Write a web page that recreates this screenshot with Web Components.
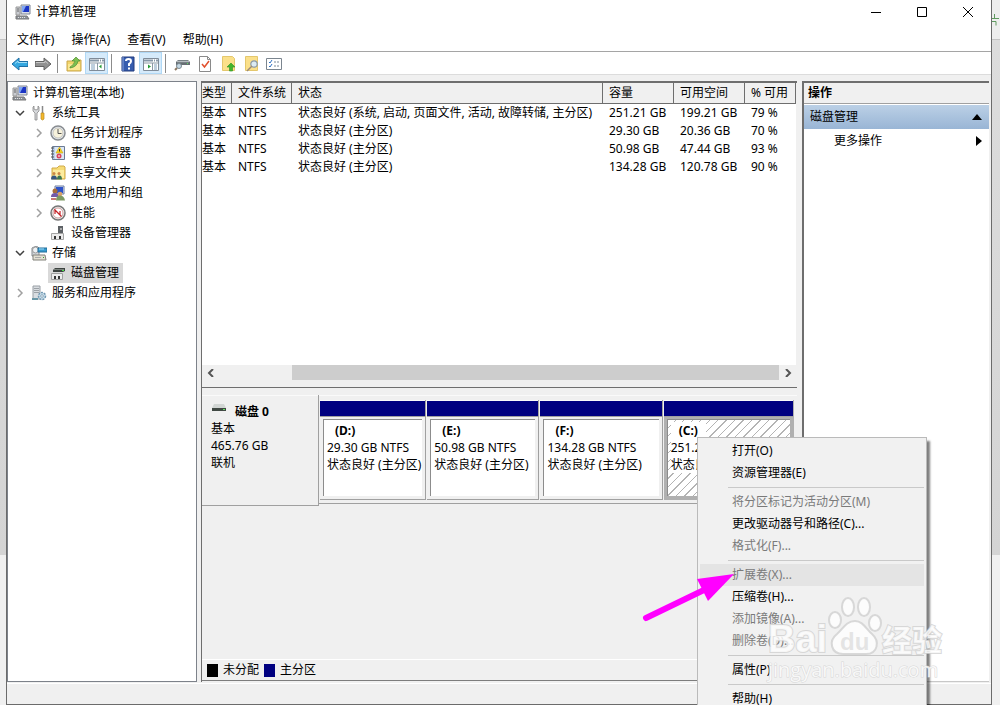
<!DOCTYPE html>
<html lang="zh-CN">
<head>
<meta charset="utf-8">
<meta name="viewport" content="width=device-width, initial-scale=1">
<title>计算机管理</title>
<style>
  html, body {
    height: 100%;
    margin: 0;
  }

  body {
    position: relative;
    box-sizing: border-box;
    overflow: hidden;
    padding: 0 8px 0 6px;
    background: linear-gradient(#eeeeee 39px, #c4c4c4 39px, #c4c4c4 40px, #dcdcdc 40px, #d4d4d4 555px, #f0f0f0 555px);
    color: #000;
    font: 12px/16px "Noto Sans", "Noto Sans CJK SC", sans-serif;
  }
</style>
</head>
<body>
<mmc-window heading="计算机管理">
  <menu-strip slot="menu" items="文件(F),操作(A),查看(V),帮助(H)"></menu-strip>
  <tool-strip slot="tools"></tool-strip>

  <nav-tree slot="tree">
    <tree-item level="0" icon="computer" label="计算机管理(本地)"></tree-item>
    <tree-item level="1" icon="tools" label="系统工具" state="open"></tree-item>
    <tree-item level="2" icon="clock" label="任务计划程序" state="closed"></tree-item>
    <tree-item level="2" icon="events" label="事件查看器" state="closed"></tree-item>
    <tree-item level="2" icon="share" label="共享文件夹" state="closed"></tree-item>
    <tree-item level="2" icon="users" label="本地用户和组" state="closed"></tree-item>
    <tree-item level="2" icon="gauge" label="性能" state="closed"></tree-item>
    <tree-item level="2" icon="device" label="设备管理器"></tree-item>
    <tree-item level="1" icon="storage" label="存储" state="open"></tree-item>
    <tree-item level="2" icon="disk" label="磁盘管理" selected></tree-item>
    <tree-item level="1" icon="services" label="服务和应用程序" state="closed"></tree-item>
  </nav-tree>

  <volume-list slot="volumes"></volume-list>

  <disk-map slot="disks">
    <disk-partition label="(D:)" size="29.30 GB NTFS" status="状态良好 (主分区)"></disk-partition>
    <disk-partition label="(E:)" size="50.98 GB NTFS" status="状态良好 (主分区)"></disk-partition>
    <disk-partition label="(F:)" size="134.28 GB NTFS" status="状态良好 (主分区)"></disk-partition>
    <disk-partition label="(C:)" size="251.21 GB NTFS" status="状态良好" selected></disk-partition>
  </disk-map>

  <action-pane slot="actions"></action-pane>
</mmc-window>

<edge-mark></edge-mark>
<context-menu></context-menu>
<site-watermark></site-watermark>
<pointer-arrow></pointer-arrow>

<script>
const ICONS = {
  computer: `<path d="M6 1h9v9H6z" fill="#d9dde8" stroke="#7d8494"/><path d="M7 2h7v6H7z" fill="#1b35c4"/><path d="M7 2h4L8 8H7z" fill="#7fa5f2"/><path d="M1 3h4v8H1z" fill="#c9ccd2" stroke="#999"/><path d="M2 5h2M2 7h2" stroke="#666"/><path d="M1 12h11l2 3H1z" fill="#8e949c" stroke="#777"/><path d="M3 13.500h8" stroke="#e4e4e4" stroke-dasharray="1 1"/>`,
  tools: `<path d="M3 1v3l2 1 2-1V1l1 1v4L6 8v7H4V8L2 6V2z" fill="#d7d9dc" stroke="#888" stroke-width=".8"/><path d="M11.500 1v7" stroke="#888" stroke-width="1.500"/><path d="M10 8h3v6q-1.500 2-3 0z" fill="#f4b92c" stroke="#b98a20" stroke-width=".7"/>`,
  clock: `<circle cx="8" cy="8" r="7" fill="#e8ebee" stroke="#888c90" stroke-width="1.500"/><circle cx="8" cy="8" r="5" fill="#f7f2dc" stroke="#aaa" stroke-width=".6"/><path d="M8 4v4.500h3.500" fill="none" stroke="#555"/>`,
  events: `<path d="M2.500 1.500h12v13h-12z" fill="#b9d0ec" stroke="#6b7a94"/><path d="M5 2h9v12H5z" fill="#dce7f5"/><path d="M1 3h3M1 6h3M1 9h3M1 12h3" stroke="#555"/><path d="M9.500 2l3.500 6H6z" fill="#f7d21d" stroke="#c9a810" stroke-width=".6"/><path d="M9.500 4v2.500" stroke="#333"/><circle cx="9" cy="11" r="2.500" fill="#d9455a"/><path d="M8 11h2" stroke="#fff"/>`,
  share: `<path d="M2 3h5l2-2h5l1 1v12H2z" fill="#f7dc77" stroke="#d0aa48"/><path d="M3 5h11v8H3z" fill="#fcec9f"/><circle cx="4" cy="8.500" r="1.500" fill="#c98645"/><path d="M1 14.500q0-4 3-4t3 4z" fill="#36567e"/><circle cx="9" cy="8.500" r="1.500" fill="#c98645"/><path d="M7 14.500q0-4 2.500-4t2.500 4z" fill="#3a7652"/>`,
  users: `<path d="M5 1h9v8H5z" fill="#d9e2f3" stroke="#6d7da0"/><path d="M6 2h7v6H6z" fill="#2e53c9"/><circle cx="5" cy="6" r="2.500" fill="#a86c3c"/><path d="M1 12q0-4 4-4t4 4z" fill="#7259a8"/><circle cx="10" cy="9" r="2.300" fill="#d9a066"/><path d="M6 15.500q0-5 4-5t5 5z" fill="#7d9a63"/><path d="M1 13h5v2H1z" fill="#c77a76"/>`,
  gauge: `<circle cx="8" cy="8" r="7" fill="#eee" stroke="#777" stroke-width="1.500"/><circle cx="8" cy="8" r="5" fill="#fff" stroke="#b77" stroke-width=".7"/><path d="M4.500 4.500l7 7M5 9V5l5 5V6" fill="none" stroke="#c41f24" stroke-width="1.200"/>`,
  device: `<path d="M8 1h5v8H8z" fill="#5d6165"/><path d="M10 3h2v2h-2z" fill="#aaa"/><path d="M1.500 8.500h12v6h-12z" fill="#ececec" stroke="#a5a5a5"/><path d="M4 11h2v3H4zM9 11h2v3H9z" fill="#333"/>`,
  storage: `<path d="M1 3q5-3 7 0v8H1z" fill="#d5d9dd" stroke="#858b90"/><circle cx="4.500" cy="5" r="3" fill="#eef1f3" stroke="#999"/><path d="M7 3h9v4H7z" fill="#359bd0" stroke="#236c98"/><path d="M8 4h5" stroke="#a7ddf6"/><path d="M2 10h12l1 5H2z" fill="#e2dfd2" stroke="#82817b"/><path d="M4 12.500h6" stroke="#aaa"/><path d="M12 12h1v1h-1z" fill="#2aa52a"/>`,
  disk: `<path d="M3 5l2-2h10v3l-2 1H3z" fill="#3d4340"/><path d="M4 4.500h10" stroke="#7b837e"/><path d="M12 5h2v1h-2z" fill="#4be04b"/><path d="M1.500 8.500h11v6h-11z" fill="#ececec" stroke="#a0a0a0"/><path d="M4 11h2v3H4zM8 11h2v3H8z" fill="#333"/>`,
  services: `<path d="M2 1h7v13H2z" fill="#d9dde1" stroke="#999fa5"/><path d="M3 3.500h5M3 5.500h5M3 7.500h5" stroke="#9ca1a6"/><path d="M1 14h6" stroke="#6a98a8" stroke-width="2"/><circle cx="11" cy="11" r="3.500" fill="#c9deeb" stroke="#7197b1" stroke-width="1.500" stroke-dasharray="2 1"/><circle cx="11" cy="11" r="1.300" fill="#fff" stroke="#557d9b" stroke-width=".6"/>`,
  back: `<path d="M0 8l7-6v3.500h9v5H7V14z" fill="#35a8e0" stroke="#1f6fa5"/><path d="M3 7.500l3-2.500v1.500h9" fill="none" stroke="#a2def7"/>`,
  forward: `<path d="M16 8L9 2v3.500H0v5h9V14z" fill="#919191" stroke="#626262"/><path d="M1 6.500h9V5l3 2.500" fill="none" stroke="#c6c6c6"/>`,
  up: `<path d="M1 5h5l1-1h8v11H1z" fill="#f3d66c" stroke="#c9a64a"/><path d="M2 8h12v6H2z" fill="#fbe895"/><path d="M4 11q4-2 5-6H6l4-4 4 4h-2q-1 6-8 7z" fill="#7cc050" stroke="#4f8f35" stroke-width=".7"/>`,
  tree: `<path d="M.5 2.500h15v12H.5z" fill="#fff" stroke="#7f8b98"/><path d="M1 4.500h14" stroke="#8697a8" stroke-width="2" stroke-dasharray="9 1 1 1"/><path d="M1 7h14" stroke="#8b98a5"/><path d="M8.500 7v7" stroke="#8b98a5"/><path d="M2 9h4M2 11h4M2 13h4" stroke="#7f9fbc"/><path d="M12.500 8.500v4L10 10.500z" fill="#269b34"/>`,
  help: `<path d="M2 1h12v14H2z" fill="#365cae" stroke="#203a7c"/><path d="M3 1v14" stroke="#8aa5e0"/><path d="M6 5q0-2 2.500-2T11 5.200Q11 7 9 8v2" fill="none" stroke="#fff" stroke-width="2"/><path d="M8 11.500h2v2H8z" fill="#fff"/>`,
  pane: `<path d="M.5 2.500h15v12H.5z" fill="#fff" stroke="#7f8b98"/><path d="M1 4.500h14" stroke="#8697a8" stroke-width="2" stroke-dasharray="9 1 1 1"/><path d="M1 7h14" stroke="#8b98a5"/><path d="M9.500 7v7" stroke="#8b98a5"/><path d="M11 9h3M11 11h3M11 13h3" stroke="#7f9fbc"/><path d="M5 8.500v4l3-2z" fill="#269b34"/>`,
  drive: `<path d="M2 6l2-2h10l2 2v3H2z" fill="#666e73"/><path d="M3 5.500h12" stroke="#b5bcc0" stroke-width="1.500"/><circle cx="5" cy="10" r="2.500" fill="#c5d8e4" stroke="#7b8991"/><path d="M3 12l-2 2" stroke="#8b7761" stroke-width="2"/><path d="M13 7h1v1h-1z" fill="#5be15b"/>`,
  check: `<path d="M2.500.5h8l3 3v12h-11z" fill="#fff" stroke="#8a8a8a"/><path d="M10.500.5v3h3" fill="none" stroke="#8a8a8a"/><path d="M5 8l2.500 3L12 5" fill="none" stroke="#e1502d" stroke-width="1.500"/>`,
  export: `<path d="M2.500.5h10l2 2v12h-12z" fill="#fbe08a" stroke="#e4c76d"/><path d="M11 7l4 4h-2.500v4h-3v-4H7z" fill="#43b52b" stroke="#3b9a2c" stroke-width=".7"/>`,
  find: `<path d="M2.500.5h12v14h-12z" fill="#fbe08a" stroke="#e4c76d"/><circle cx="11" cy="8" r="3.200" fill="#dcebf4" stroke="#8b9aa6" stroke-width="1.200"/><path d="M9 10l-5 5" stroke="#9b8a78" stroke-width="1.500"/>`,
  options: `<path d="M.5 2.500h15v11H.5z" fill="#fff" stroke="#7b858f"/><path d="M3 6l1 1 2-3M3 10l1 1 2-3" fill="none" stroke="#2f6fc1"/><path d="M8 6h5M8 10h5" stroke="#7d8996" stroke-dasharray="2 1"/>`,
  hdd: `<path d="M3 4h10l2 4H1z" fill="#d2d6d4"/><path d="M1 8h14v3H1z" fill="#414944"/><path d="M12 9h2v1h-2z" fill="#61e861"/>`
};

class MmcIcon extends HTMLElement {
  constructor() {
    super();
    this.shadowDOM = this.attachShadow({ mode: 'open' });
  }

  connectedCallback() {
    this.shadowDOM.innerHTML = `
    <style>
    :host {
      display: block;
      flex: none;
      width: 16px;
      height: 16px;
    }
    svg {
      display: block;
    }
    </style>
    <svg width="16" height="16" viewBox="0 0 16 16" fill="none" aria-hidden="true">${ICONS[this.getAttribute('name')]}</svg>`;
  }
}

class MmcWindow extends HTMLElement {
  constructor() {
    super();
    this.shadowDOM = this.attachShadow({ mode: 'open' });
  }

  connectedCallback() {
    this.shadowDOM.innerHTML = `
    <style>
    :host {
      display: flex;
      flex-direction: column;
      box-sizing: border-box;
      height: 100vh;
      border: 1px solid #6b6b6b;
      border-top: 0;
      background: #f0f0f0;
    }
    header {
      display: flex;
      align-items: center;
      height: 24px;
      background: #fff;
    }
    mmc-icon {
      margin: 0 5px 0 8px;
    }
    h1 {
      flex: 1;
      margin: 0;
      font: inherit;
    }
    header button {
      width: 46px;
      height: 24px;
      padding: 0;
      border: 0;
      background: none;
    }
    header svg {
      display: block;
      margin: auto;
    }
    main {
      flex: 1;
      display: grid;
      grid-template-columns: 190px minmax(0, 1fr) 188px;
      gap: 4px;
      min-height: 0;
      padding: 6px 1px 0 0;
    }
    .center {
      display: grid;
      grid-template-rows: 51fr 49fr;
      min-height: 0;
      padding-right: 1px;
    }
    footer {
      height: 20px;
      margin-top: 1px;
      border-top: 1px solid #fff;
    }
    </style>
    <header>
      <mmc-icon name="computer"></mmc-icon>
      <h1>${this.getAttribute('heading')}</h1>
      <button aria-label="最小化"><svg width="12" height="12"><path d="M1 6.500h10" stroke="#000"/></svg></button>
      <button aria-label="最大化"><svg width="12" height="12"><path d="M1.500 1.500h9v9h-9z" fill="none" stroke="#000"/></svg></button>
      <button aria-label="关闭"><svg width="12" height="12"><path d="M1 1l10 10M11 1L1 11" stroke="#000"/></svg></button>
    </header>
    <slot name="menu"></slot>
    <slot name="tools"></slot>
    <main>
      <slot name="tree"></slot>
      <div class="center">
        <slot name="volumes"></slot>
        <slot name="disks"></slot>
      </div>
      <slot name="actions"></slot>
    </main>
    <footer></footer>`;
  }
}

class MenuStrip extends HTMLElement {
  constructor() {
    super();
    this.shadowDOM = this.attachShadow({ mode: 'open' });
  }

  connectedCallback() {
    const items = this.getAttribute('items').split(',');
    this.shadowDOM.innerHTML = `
    <style>
    :host {
      display: flex;
      gap: 1px;
      padding: 4px 2px 0;
      border-bottom: 1px solid #a5a5a5;
      background: #fff;
    }
    button {
      height: 23px;
      padding: 0 8px;
      border: 0;
      background: none;
      color: inherit;
      font: inherit;
    }
    button:hover {
      background: #e5f3ff;
    }
    </style>
    ${items.map(item => `<button>${item}</button>`).join('')}`;
  }
}

class ToolStrip extends HTMLElement {
  constructor() {
    super();
    this.shadowDOM = this.attachShadow({ mode: 'open' });
  }

  connectedCallback() {
    const tools = [
      ['back', '后退'], ['forward', '前进'], null,
      ['up', '向上'], ['tree', '显示/隐藏控制台树', true], null,
      ['help', '帮助'], ['pane', '显示/隐藏操作窗格', true], null,
      ['drive', '刷新'], ['check', '属性'], ['export', '导出'], ['find', '查找'], ['options', '设置']
    ];
    this.shadowDOM.innerHTML = `
    <style>
    :host {
      display: flex;
      height: 22px;
      padding: 0 1px;
      border-bottom: 1px solid #dcdcdc;
      background: #fff;
    }
    button {
      display: flex;
      align-items: center;
      justify-content: center;
      box-sizing: border-box;
      width: 23px;
      padding: 2px 0 0;
      border: 0;
      background: none;
    }
    .on {
      border: 1px solid #b0d8f5;
      background: #d5eafa;
    }
    i {
      width: 1px;
      margin: 2px 4px 1px 3px;
      background: #8c8c8c;
    }
    </style>
    ${tools.map(t => t ? `<button class="${t[2] ? 'on' : ''}" aria-label="${t[1]}"><mmc-icon name="${t[0]}"></mmc-icon></button>` : '<i></i>').join('')}`;
  }
}

class NavTree extends HTMLElement {
  constructor() {
    super();
    this.shadowDOM = this.attachShadow({ mode: 'open' });
    this.shadowDOM.innerHTML = `
    <style>
    :host {
      display: block;
      box-sizing: border-box;
      padding-top: 1px;
      border: 1px solid #7d828a;
      background: #fff;
      overflow: hidden;
    }
    </style>
    <slot></slot>`;
  }
}

class TreeItem extends HTMLElement {
  constructor() {
    super();
    this.shadowDOM = this.attachShadow({ mode: 'open' });
  }

  connectedCallback() {
    const level = Number(this.getAttribute('level'));
    const state = this.getAttribute('state');
    const arrow = state === 'open'
      ? '<path d="M1 3l4 4 4-4" stroke="#404040"/>'
      : '<path d="M3 1l4 4-4 4" stroke="#a0a0a0"/>';
    this.shadowDOM.innerHTML = `
    <style>
    :host {
      display: flex;
      height: 20px;
      padding-left: ${level ? level * 19 - 17 : 2}px;
    }
    .toggle {
      display: flex;
      align-items: center;
      justify-content: center;
      width: 19px;
      padding: 0;
      border: 0;
      background: none;
    }
    .label {
      display: flex;
      align-items: center;
      gap: 5px;
      padding: 0 4px 0 2px;
      border: 0;
      background: none;
      color: inherit;
      font: inherit;
      white-space: nowrap;
    }
    :host([selected]) .label {
      background: #d9d9d9;
    }
    </style>
    ${level ? (state ? `<button class="toggle" aria-label="展开"><svg width="10" height="10" fill="none" stroke-width="1.500">${arrow}</svg></button>` : '<span class="toggle"></span>') : ''}
    <button class="label"><mmc-icon name="${this.getAttribute('icon')}"></mmc-icon>${this.getAttribute('label')}</button>`;
  }
}

class VolumeList extends HTMLElement {
  constructor() {
    super();
    this.shadowDOM = this.attachShadow({ mode: 'open' });
  }

  connectedCallback() {
    const heads = ['类型', '文件系统', '状态', '容量', '可用空间', '% 可用'];
    const rows = [
      ['基本', 'NTFS', '状态良好 (系统, 启动, 页面文件, 活动, 故障转储, 主分区)', '251.21 GB', '199.21 GB', '79 %'],
      ['基本', 'NTFS', '状态良好 (主分区)', '29.30 GB', '20.36 GB', '70 %'],
      ['基本', 'NTFS', '状态良好 (主分区)', '50.98 GB', '47.44 GB', '93 %'],
      ['基本', 'NTFS', '状态良好 (主分区)', '134.28 GB', '120.78 GB', '90 %']
    ];
    this.shadowDOM.innerHTML = `
    <style>
    :host {
      display: flex;
      flex-direction: column;
      box-sizing: border-box;
      min-height: 0;
      border: solid #6e6e6e;
      border-width: 2px 0 1px 1px;
      background: #f0f0f0;
    }
    .sheet {
      flex: 1;
      min-height: 0;
      margin-right: 1px;
      background: #fff;
    }
    table {
      width: 100%;
      table-layout: fixed;
      border-collapse: separate;
      border-spacing: 0;
    }
    th {
      box-sizing: border-box;
      height: 21px;
      padding: 0 6px;
      border: solid #6e6e6e;
      border-width: 0 1px 1px 0;
      background: #f0f0f0;
      font-weight: 400;
      text-align: left;
    }
    td {
      height: 18px;
      padding: 0 0 0 6px;
    }
    th, td {
      line-height: 16px;
      white-space: nowrap;
    }
    th:first-child, td:first-child {
      padding: 0;
    }
    .type { width: 30px; }
    .fs { width: 60px; }
    .size { width: 71px; }
    .pct { width: 51px; }
    .scroll {
      display: flex;
      align-items: center;
      height: 16px;
      margin: 0 1px 6px 0;
    }
    .scroll button {
      width: 17px;
      height: 16px;
      padding: 0;
      border: 0;
      background: none;
    }
    .scroll svg {
      display: block;
      margin: auto;
    }
    .track {
      flex: 1;
      display: grid;
      grid-template-columns: 13fr 87fr;
      height: 15px;
    }
    .thumb {
      grid-column: 2;
      background: #cdcdcd;
    }
    </style>
    <div class="sheet">
      <table>
        <colgroup><col class="type"><col class="fs"><col><col class="size"><col class="size"><col class="pct"></colgroup>
        <thead><tr>${heads.map(h => `<th>${h}</th>`).join('')}</tr></thead>
        <tbody>${rows.map(r => `<tr>${r.map(c => `<td>${c}</td>`).join('')}</tr>`).join('')}</tbody>
      </table>
    </div>
    <div class="scroll">
      <button aria-label="向左滚动"><svg width="8" height="8"><path d="M6 0L2 4l4 4" fill="none" stroke="#555" stroke-width="2"/></svg></button>
      <div class="track"><div class="thumb"></div></div>
      <button aria-label="向右滚动"><svg width="8" height="8"><path d="M2 0l4 4-4 4" fill="none" stroke="#555" stroke-width="2"/></svg></button>
    </div>`;
  }
}

class DiskMap extends HTMLElement {
  constructor() {
    super();
    this.shadowDOM = this.attachShadow({ mode: 'open' });
    this.shadowDOM.innerHTML = `
    <style>
    :host {
      display: flex;
      flex-direction: column;
      box-sizing: border-box;
      min-height: 0;
      padding-top: 7px;
      border-left: 1px solid #6e6e6e;
    }
    .disk {
      display: flex;
      align-items: flex-start;
    }
    .info {
      box-sizing: border-box;
      width: 117px;
      height: 111px;
      padding: 8px 9px;
      border: solid #a0a0a0;
      border-width: 0 1px 1px 0;
      box-shadow: inset 0 1px #fafafa;
      line-height: 17px;
    }
    .name {
      display: flex;
      gap: 8px;
      font-weight: 700;
    }
    .name mmc-icon {
      margin-top: -3px;
    }
    .parts {
      flex: 1;
      display: grid;
      grid-template-columns: 107fr 113fr 123fr 131fr;
      box-sizing: border-box;
      min-width: 0;
      height: 109px;
      padding: 5px 2px 3px 1px;
      border-bottom: 1px solid #a0a0a0;
      box-shadow: inset 0 1px #fafafa;
    }
    .legend {
      display: flex;
      align-items: center;
      gap: 5px;
      height: 20px;
      margin-top: auto;
      padding-left: 5px;
      border-top: 1px solid #fff;
      border-bottom: 1px solid #7d7d7d;
      margin-bottom: 1px;
    }
    .legend i {
      width: 11px;
      height: 13px;
      background: #000;
    }
    .legend .primary {
      background: #000080;
    }
    </style>
    <div class="disk">
      <div class="info">
        <div class="name"><mmc-icon name="hdd"></mmc-icon>磁盘 0</div>
        <div>基本</div>
        <div>465.76 GB</div>
        <div>联机</div>
      </div>
      <div class="parts"><slot></slot></div>
    </div>
    <div class="legend"><i></i><span>未分配</span><i class="primary"></i><span>主分区</span></div>`;
  }
}

class DiskPartition extends HTMLElement {
  constructor() {
    super();
    this.shadowDOM = this.attachShadow({ mode: 'open' });
  }

  connectedCallback() {
    this.shadowDOM.innerHTML = `
    <style>
    :host {
      display: flex;
      flex-direction: column;
      min-width: 0;
      margin-right: 1px;
      border-right: 1px solid #a0a0a0;
      border-bottom: 1px solid #a0a0a0;
    }
    .bar {
      height: 15px;
      border-top: 1px solid #fafafa;
      border-bottom: 1px solid #a0a0a0;
      background: #000080;
    }
    .box {
      flex: 1;
      overflow: hidden;
      margin: 2px 3px 3px;
      padding: 2px 3px;
      border: solid #8c8c8c;
      border-width: 1px 0 0 1px;
      background: #fff;
      line-height: 17px;
      white-space: nowrap;
    }
    b {
      padding: 0 8px;
    }
    :host([selected]) {
      background: #b0b0b0;
      border-color: #b0b0b0;
    }
    :host([selected]) .box {
      background: repeating-linear-gradient(135deg, #fff 0 5px, #b4b4b4 5px 6px);
    }
    :host([selected]) span, :host([selected]) b {
      background: #fff;
    }
    </style>
    <div class="bar"></div>
    <div class="box"><b>${this.getAttribute('label')}</b><br><span>${this.getAttribute('size')}</span><br><span>${this.getAttribute('status')}</span></div>`;
  }
}

class ActionPane extends HTMLElement {
  constructor() {
    super();
    this.shadowDOM = this.attachShadow({ mode: 'open' });
    this.shadowDOM.innerHTML = `
    <style>
    :host {
      display: block;
      box-sizing: border-box;
      margin-right: 1px;
      border: solid #6e6e6e;
      border-width: 2px 0 1px 2px;
      border-bottom-color: #c8c8c8;
      background: #fff;
    }
    h2 {
      margin: 0;
      padding: 2px 4px 2px;
      border-bottom: 1px solid #a0a0a0;
      background: #f0f0f0;
      font: inherit;
      font-weight: 700;
    }
    button {
      display: flex;
      align-items: center;
      justify-content: space-between;
      width: 100%;
      height: 24px;
      padding: 0 7px 0 30px;
      border: 0;
      background: none;
      color: inherit;
      font: inherit;
    }
    .group {
      padding: 0 7px 0 6px;
      margin-top: 1px;
      background: linear-gradient(#bbd0e6, #99b5d5);
    }
    </style>
    <h2>操作</h2>
    <button class="group">磁盘管理<svg width="10" height="6"><path d="M5 0l5 6H0z"/></svg></button>
    <button>更多操作<svg width="6" height="10"><path d="M0 0l6 5-6 5z"/></svg></button>`;
  }
}

class ContextMenu extends HTMLElement {
  constructor() {
    super();
    this.shadowDOM = this.attachShadow({ mode: 'open' });
  }

  connectedCallback() {
    // a null entry is a separator line
    const items = [
      { text: '打开(O)' },
      { text: '资源管理器(E)' },
      null,
      { text: '将分区标记为活动分区(M)', off: true },
      { text: '更改驱动器号和路径(C)...' },
      { text: '格式化(F)...', off: true },
      null,
      { text: '扩展卷(X)...', off: true, hot: true },
      { text: '压缩卷(H)...' },
      { text: '添加镜像(A)...', off: true },
      { text: '删除卷(D)...', off: true },
      null,
      { text: '属性(P)' },
      null,
      { text: '帮助(H)' }
    ];
    this.shadowDOM.innerHTML = `
    <style>
    :host {
      position: absolute;
      left: 697px;
      top: 437px;
      box-sizing: border-box;
      width: 230px;
      padding: 2px;
      border: 1px solid #bababa;
      background: #f1f1f1;
      box-shadow: 3px 4px 2px rgba(0, 0, 0, .5);
    }
    button {
      display: block;
      width: 100%;
      height: 22px;
      padding: 0 0 0 32px;
      border: 0;
      background: none;
      color: #000;
      font: inherit;
      text-align: left;
    }
    button:disabled {
      color: #7a7a7a;
    }
    .hot {
      background: #e4e4e4;
    }
    hr {
      height: 1px;
      margin: 3px 0 3px 28px;
      border: 0;
      background: #c9c9c9;
    }
    </style>
    ${items.map(i => i ? `<button class="${i.hot ? 'hot' : ''}" ${i.off ? 'disabled' : ''}>${i.text}</button>` : '<hr>').join('')}`;
  }
}

class SiteWatermark extends HTMLElement {
  constructor() {
    super();
    this.shadowDOM = this.attachShadow({ mode: 'open' });
    this.shadowDOM.innerHTML = `
    <style>
    :host {
      position: absolute;
      left: 764px;
      top: 592px;
      pointer-events: none;
    }
    svg {
      display: block;
    }
    text {
      font-family: "Liberation Sans", "Noto Sans CJK SC", sans-serif;
      font-weight: 700;
      paint-order: stroke;
    }
    .site {
      font-family: "Open Sans", sans-serif;
      font-weight: 400;
    }
    </style>
    <svg width="190" height="96" fill="#fff" fill-opacity=".8" stroke="#d0d0d0" stroke-opacity=".8" stroke-width="2">
      <text x="4" y="60" font-size="38">Bai</text>
      <ellipse cx="71" cy="28" rx="6" ry="8"/>
      <ellipse cx="84" cy="15" rx="6" ry="9"/>
      <ellipse cx="100" cy="15" rx="6" ry="9"/>
      <ellipse cx="111" cy="31" rx="6" ry="8"/>
      <path d="M91 29c-9 0-12 8-18 13-9 7-6 20 6 20 6 0 18 0 23 0 12 0 14-13 6-20-6-5-9-13-17-13z"/>
      <text x="76" y="58" font-size="24" fill="#dedede" stroke="none">du</text>
      <text x="118" y="59" font-size="30">经验</text>
      <text class="site" x="4" y="85" font-size="20" stroke-width="1">jingyan.baidu.com</text>
    </svg>`;
  }
}

class PointerArrow extends HTMLElement {
  constructor() {
    super();
    this.shadowDOM = this.attachShadow({ mode: 'open' });
    this.shadowDOM.innerHTML = `
    <style>
    :host {
      position: absolute;
      left: 640px;
      top: 570px;
      pointer-events: none;
    }
    svg {
      display: block;
    }
    </style>
    <svg width="96" height="54" fill="#ff00ff" aria-hidden="true">
      <path d="M6 48L66 19" stroke="#ff00ff" stroke-width="6" stroke-linecap="round"/>
      <path d="M94 4L57 9l11 22z"/>
    </svg>`;
  }
}

class EdgeMark extends HTMLElement {
  constructor() {
    super();
    this.shadowDOM = this.attachShadow({ mode: 'open' });
    this.shadowDOM.innerHTML = `
    <style>
    :host {
      position: absolute;
      right: 0;
      top: 14px;
    }
    svg {
      display: block;
    }
    </style>
    <svg width="8" height="12" fill="none" stroke="#5f9a5f" aria-hidden="true"><path d="M2.500 0v4M0 4.500h7M0 7.500h4v4"/></svg>`;
  }
}

customElements.define('mmc-icon', MmcIcon);
customElements.define('menu-strip', MenuStrip);
customElements.define('tool-strip', ToolStrip);
customElements.define('nav-tree', NavTree);
customElements.define('tree-item', TreeItem);
customElements.define('volume-list', VolumeList);
customElements.define('disk-map', DiskMap);
customElements.define('disk-partition', DiskPartition);
customElements.define('action-pane', ActionPane);
customElements.define('mmc-window', MmcWindow);
customElements.define('context-menu', ContextMenu);
customElements.define('site-watermark', SiteWatermark);
customElements.define('pointer-arrow', PointerArrow);
customElements.define('edge-mark', EdgeMark);
</script>
</body>
</html>
